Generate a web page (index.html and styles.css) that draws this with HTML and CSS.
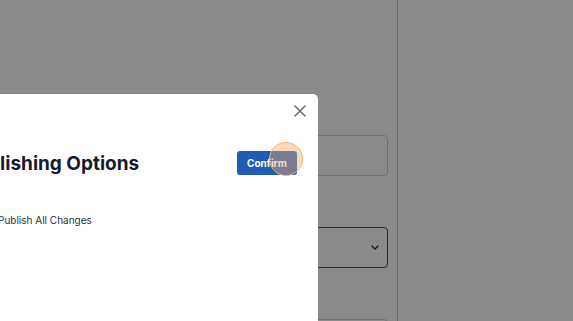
FILE: index.html
```html
<!DOCTYPE html>
<html lang="en">
<head>
  <meta charset="UTF-8" />
  <meta name="viewport" content="width=device-width, initial-scale=1.0" />
  <title>Publishing Options</title>
  <link rel="stylesheet" href="styles.css">
</head>
<body>
  <div class="page">
    <!-- FORM BEHIND -->
    <div class="main">
      <div class="field field-input"></div>
      <div class="field field-select">
        <svg class="chevron" width="8" height="5" viewBox="0 0 8 5">
          <path d="M1 1l3 3 3-3" fill="none" stroke="#2b2b2b" stroke-width="1.3" stroke-linecap="round" stroke-linejoin="round"/>
        </svg>
      </div>
      <div class="field field-input"></div>
    </div>
    <div class="side"></div>
  </div>

  <div class="overlay"></div>

  <!-- MODAL -->
  <div class="modal">
    <button class="close" aria-label="Close">
      <svg width="12" height="12" viewBox="0 0 12 12">
        <path d="M1 1l10 10M11 1L1 11" stroke="#6b6b73" stroke-width="1.5" stroke-linecap="round"/>
      </svg>
    </button>
    <div class="modal-header">
      <h2 class="modal-title">Publishing Options</h2>
      <button class="confirm">Confirm</button>
    </div>
    <label class="option">
      <span class="radio"></span>
      <span>Publish All Changes</span>
    </label>
  </div>

  <div class="click-mark"></div>
</body>
</html>
```

FILE: styles.css
```css
* {
  margin: 0;
  padding: 0;
  box-sizing: border-box;
}

body {
  background: #fff;
  font-family: 'Inter', 'Liberation Sans', sans-serif;
  color: #1a1f36;
  overflow: hidden;
  width: 573px;
  height: 321px;
}

.page {
  display: flex;
  height: 321px;
}

.main {
  width: 397px;
  padding: 135px 9px 0 0;
  display: flex;
  flex-direction: column;
  gap: 51px;
}

.side {
  flex: 1;
  border-left: 1px solid #c4c4c4;
}

.field {
  height: 41px;
  border: 1px solid #cfcfcf;
  border-radius: 4px;
  flex-shrink: 0;
  position: relative;
}

.field-select {
  border-color: #1f56a8;
  display: flex;
  align-items: center;
  justify-content: flex-end;
  padding-right: 8px;
}

.overlay {
  position: absolute;
  inset: 0;
  background: rgba(0, 0, 0, 0.46);
}

.modal {
  position: absolute;
  left: -60px;
  top: 94px;
  width: 378px;
  height: 260px;
  background: #fff;
  border-radius: 5px;
  padding: 57px 21px 0 24px;
}

.close {
  position: absolute;
  top: 11px;
  right: 12px;
  width: 12px;
  height: 12px;
  border: none;
  background: none;
  display: flex;
}

.modal-header {
  display: flex;
  align-items: center;
  justify-content: space-between;
  height: 24px;
}

.modal-title {
  font-size: 19px;
  font-weight: 700;
  color: #161b2e;
}

.confirm {
  font-family: inherit;
  background: #1f5db4;
  color: #fff;
  border: none;
  border-radius: 3px;
  height: 24px;
  width: 60px;
  font-size: 10px;
  font-weight: 700;
}

.option {
  display: flex;
  align-items: center;
  gap: 20px;
  margin-top: 38px;
  font-size: 10px;
  color: #2e3036;
}

.radio {
  width: 14px;
  height: 14px;
  border-radius: 50%;
  border: 1px solid #b8b8c0;
}

.click-mark {
  position: absolute;
  left: 269px;
  top: 142px;
  width: 34px;
  height: 34px;
  border-radius: 50%;
  border: 1.5px solid #f5b46e;
  background: rgba(245, 170, 100, 0.42);
}
```
